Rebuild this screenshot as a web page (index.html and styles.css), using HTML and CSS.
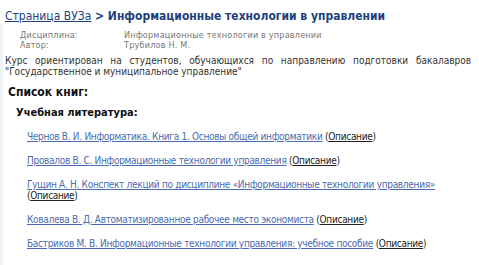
FILE: index.html
```html
<!DOCTYPE html>
<html lang="ru">
<head>
  <meta charset="UTF-8">
  <title>Информационные технологии в управлении</title>
  <link rel="stylesheet" href="styles.css">
</head>
<body>
  <h1 class="crumbs"><a href="#">Страница ВУЗа</a> &gt; Информационные технологии в управлении</h1>

  <div class="page">
    <dl class="info">
      <dt>Дисциплина:</dt>
      <dd>Информационные технологии в управлении</dd>
      <dt>Автор:</dt>
      <dd>Трубилов Н. М.</dd>
    </dl>

    <p class="about">Курс ориентирован на студентов, обучающихся по направлению подготовки бакалавров "Государственное и муниципальное управление"</p>

    <h2>Список книг:</h2>

    <div class="books">
      <h3>Учебная литература:</h3>
      <ul>
        <li><a href="#">Чернов В. И. Информатика. Книга 1. Основы общей информатики</a> (<a class="desc" href="#">Описание</a>)</li>
        <li><a href="#">Провалов В. С. Информационные технологии управления</a> (<a class="desc" href="#">Описание</a>)</li>
        <li><a href="#">Гущин А. Н. Конспект лекций по дисциплине «Информационные технологии управления»</a> (<a class="desc" href="#">Описание</a>)</li>
        <li><a href="#">Ковалева В. Д. Автоматизированное рабочее место экономиста</a> (<a class="desc" href="#">Описание</a>)</li>
        <li><a href="#">Бастриков М. В. Информационные технологии управления: учебное пособие</a> (<a class="desc" href="#">Описание</a>)</li>
      </ul>
    </div>
  </div>
</body>
</html>
```

FILE: styles.css
```css
body {
  margin: 0;
  padding: 0;
  background-color: #fff;
  font-family: "DejaVu Sans", sans-serif;
  font-stretch: condensed;
  color: #333;
}
.crumbs {
  margin: 0;
  padding: 8px 5px 0 5px;
  font-size: 12px;
  line-height: 16px;
  font-weight: bold;
  color: #1d3f7e;
}
.crumbs a {
  color: #1d3f7e;
  font-weight: normal;
}
.page {
  border-left: 3px solid #eef3fa;
  padding: 6px 8px 0 2px;
  min-height: 240px;
}
.info {
  display: grid;
  grid-template-columns: 104px 1fr;
  margin: 0 0 0 15px;
  font-size: 9px;
  line-height: 10px;
  letter-spacing: 0.2px;
  color: #777;
}
.info dd {
  margin: 0;
}
.about {
  margin: 5px 0 0 0;
  font-size: 10px;
  line-height: 11px;
  text-align: justify;
  color: #333;
}
h2 {
  margin: 8px 0 0 3px;
  font-size: 12px;
  line-height: 14px;
  color: #111;
}
.books {
  padding-left: 11px;
}
h3 {
  margin: 7px 0 0 0;
  font-size: 11px;
  line-height: 13px;
  color: #111;
}
.books ul {
  list-style: none;
  margin: 0;
  padding: 12px 0 0 11px;
}
.books li {
  font-size: 10px;
  line-height: 11px;
  letter-spacing: -0.3px;
  color: #222;
  margin-bottom: 13px;
}
.books li a {
  color: #4a6bb0;
}
.books li a.desc {
  color: #222;
}
```
